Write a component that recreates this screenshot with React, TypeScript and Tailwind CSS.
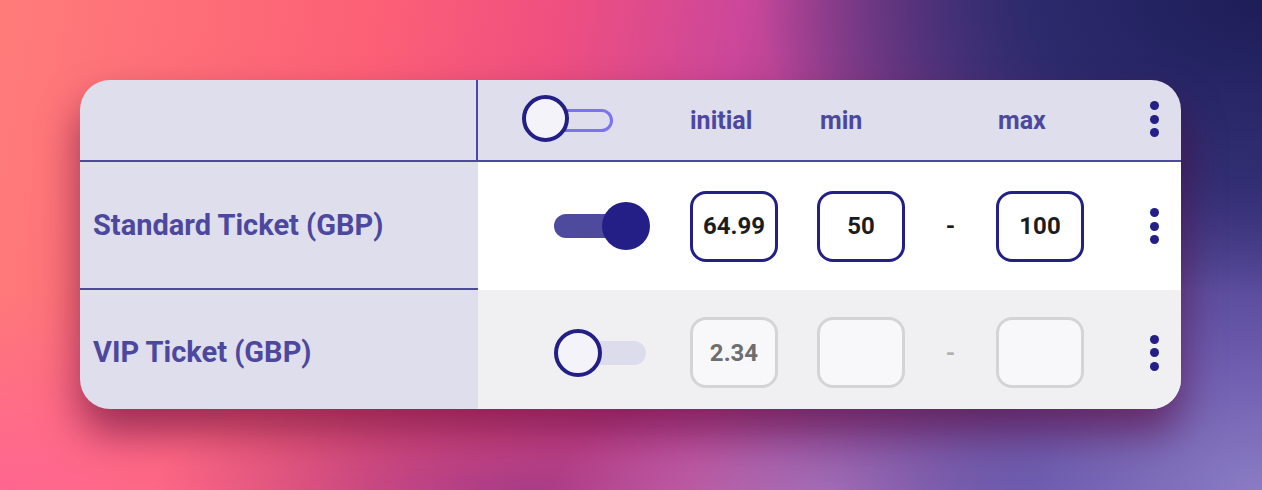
import React from "react";

function Dots() {
  return (
    <div className="flex w-[9px] flex-col gap-[4.5px]">
      <span className="block h-[9px] w-[9px] rounded-full bg-[#231f86]" />
      <span className="block h-[9px] w-[9px] rounded-full bg-[#231f86]" />
      <span className="block h-[9px] w-[9px] rounded-full bg-[#231f86]" />
    </div>
  );
}

function HeaderToggle() {
  return (
    <div className="relative h-[47px] w-[91px]">
      <div className="absolute left-[4px] top-[14px] h-[23px] w-[87px] rounded-full border-[3px] border-[#7b73f2]" />
      <div className="absolute left-0 top-0 h-[47px] w-[47px] rounded-full border-[4px] border-[#231f86] bg-[#f3f3f9]" />
    </div>
  );
}

function RowToggle({ on }: { on: boolean }) {
  return (
    <div className="relative h-[48px] w-[96px]">
      <div
        className={
          on
            ? "absolute left-0 top-[12px] h-[24px] w-[92px] rounded-full bg-[#4e4a9e]"
            : "absolute left-0 top-[12px] h-[24px] w-[92px] rounded-full bg-[#dcdcec]"
        }
      />
      {on ? (
        <div className="absolute right-0 top-0 h-[48px] w-[48px] rounded-full bg-[#231f86]" />
      ) : (
        <div className="absolute left-0 top-0 h-[48px] w-[48px] rounded-full border-[4px] border-[#231f86] bg-[#f3f3f9]" />
      )}
    </div>
  );
}

function Box({ value, active }: { value: string; active: boolean }) {
  return (
    <div
      className={
        active
          ? "flex h-[71px] w-[88px] items-center justify-center rounded-[16px] border-[3px] border-[#231f86] bg-white text-[24px] font-bold text-[#1c1c1c]"
          : "flex h-[71px] w-[88px] items-center justify-center rounded-[16px] border-[3px] border-[#d4d4d7] bg-[#f8f8fa] text-[24px] font-bold text-[#6e6e70]"
      }
    >
      {value}
    </div>
  );
}

function RowRight({
  on,
  values,
  active,
}: {
  on: boolean;
  values: [string, string, string];
  active: boolean;
}) {
  return (
    <div className="flex h-full items-center">
      <div className="w-[212px] pl-[76px]">
        <RowToggle on={on} />
      </div>
      <Box value={values[0]} active={active} />
      <div className="w-[39px]" />
      <Box value={values[1]} active={active} />
      <div
        className={
          active
            ? "flex w-[91px] justify-center text-[24px] font-bold text-[#1c1c1c]"
            : "flex w-[91px] justify-center text-[24px] font-bold text-[#b0b0b4]"
        }
      >
        -
      </div>
      <Box value={values[2]} active={active} />
      <div className="w-[66px]" />
      <Dots />
    </div>
  );
}

export default function App() {
  return (
    <div
      className="h-[490px] w-[1262px] overflow-hidden pl-[80px] pt-[80px] bg-[radial-gradient(ellipse_40%_60%_at_100%_0%,#1d1d58_0%,#2c2a6c_45%,transparent_100%),radial-gradient(ellipse_45%_65%_at_100%_100%,#8a7cc4_0%,#6e5cae_40%,transparent_100%),radial-gradient(ellipse_22%_25%_at_66%_100%,#c374b8_0%,transparent_100%),radial-gradient(ellipse_30%_22%_at_42%_100%,#a83c86_0%,transparent_100%),radial-gradient(ellipse_30%_40%_at_0%_100%,#ff6690_0%,transparent_100%),linear-gradient(100deg,#ff7c7a_0%,#fc6076_28%,#ee4f80_42%,#cc479a_55%,#8c3f90_68%,#4a3a86_82%,#3a3480_100%)]"
      style={{ fontFamily: "Roboto, 'Liberation Sans', sans-serif" }}
    >
      <div className="flex h-[329px] w-[1101px] flex-col overflow-hidden rounded-[30px] bg-[#dedeec] shadow-[0_24px_40px_rgba(90,5,55,0.6)]">
        {/* header */}
        <div className="flex h-[82px] shrink-0 border-b-2 border-[#4b4aa0]">
          <div className="h-full w-[398px] shrink-0 border-r-2 border-[#4b4aa0]" />
          <div className="flex h-full items-center">
            <div className="w-[212px] pl-[44px] pb-[3px]">
              <HeaderToggle />
            </div>
            <div className="w-[127px] text-[25px] font-bold leading-none text-[#4c489e]">
              initial
            </div>
            <div className="w-[179px] pl-[3px] text-[25px] font-bold leading-none text-[#4c489e]">
              min
            </div>
            <div className="w-[154px] pl-[2px] text-[25px] font-bold leading-none text-[#4c489e]">
              max
            </div>
            <div className="pb-[2px]">
              <Dots />
            </div>
          </div>
        </div>
        {/* row 1 */}
        <div className="flex h-[128px] shrink-0">
          <div className="flex h-full w-[398px] shrink-0 items-center border-b-2 border-[#4b4aa0] pl-[13px] pt-[2px] text-[29px] font-bold text-[#4c489e]">
            Standard Ticket (GBP)
          </div>
          <div className="h-full flex-1 bg-white">
            <RowRight on={true} values={["64.99", "50", "100"]} active={true} />
          </div>
        </div>
        {/* row 2 */}
        <div className="flex flex-1">
          <div className="flex h-full w-[398px] shrink-0 items-center pl-[13px] pt-[6px] text-[29px] font-bold text-[#4c489e]">
            VIP Ticket (GBP)
          </div>
          <div className="h-full flex-1 bg-[#f0f0f3] pt-[6px]">
            <RowRight on={false} values={["2.34", "", ""]} active={false} />
          </div>
        </div>
      </div>
    </div>
  );
}
